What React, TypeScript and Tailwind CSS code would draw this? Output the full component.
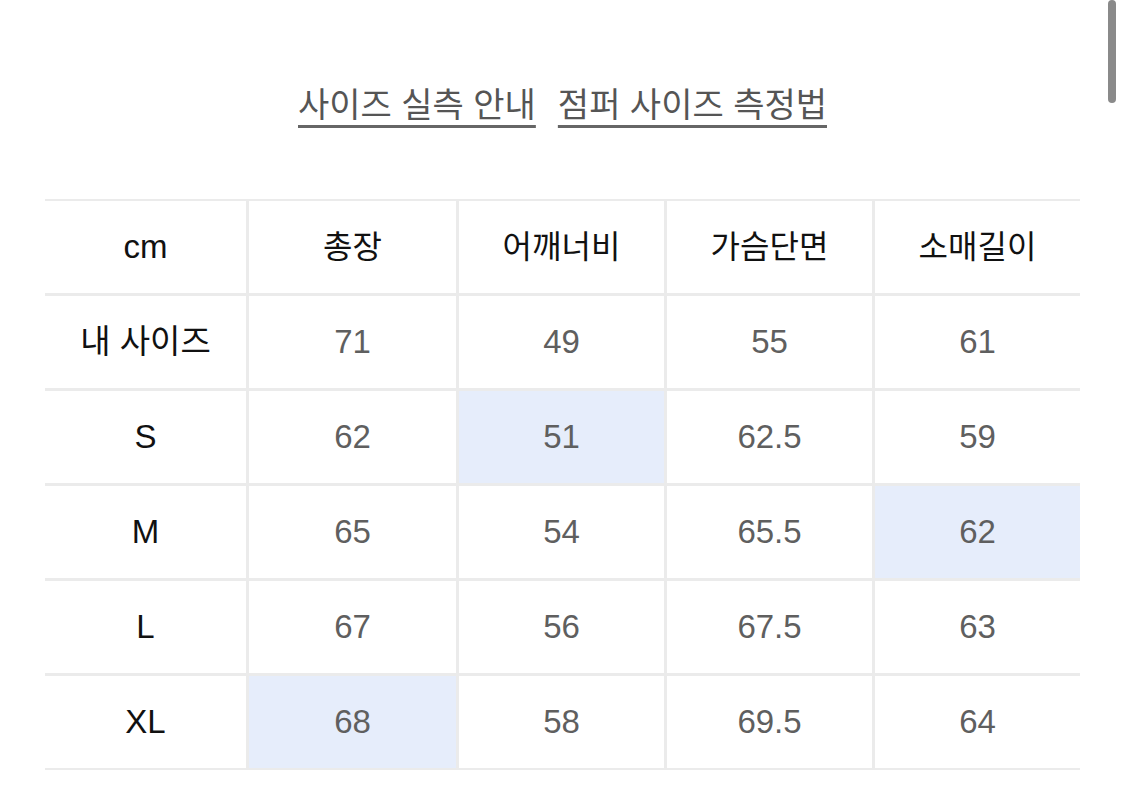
const cols = ['총장', '어깨너비', '가슴단면', '소매길이']

const rows: { label: string; values: string[]; hl?: number }[] = [
  { label: '내 사이즈', values: ['71', '49', '55', '61'] },
  { label: 'S', values: ['62', '51', '62.5', '59'], hl: 1 },
  { label: 'M', values: ['65', '54', '65.5', '62'], hl: 3 },
  { label: 'L', values: ['67', '56', '67.5', '63'] },
  { label: 'XL', values: ['68', '58', '69.5', '64'], hl: 0 },
]

const font = "font-['Liberation_Sans','Noto_Sans_CJK_KR',sans-serif]"

export default function App() {
  return (
    <div className={`relative min-h-[808px] bg-white ${font}`}>
      {/* scrollbar */}
      <div className="absolute right-[9px] top-0 h-[103px] w-[8px] rounded-full bg-[#8a8a8a]" />

      <div className="flex justify-center gap-[22px] pt-[84px] text-[34px] leading-[42px] text-[#555]">
        <span className="underline decoration-[3px] underline-offset-[8px] decoration-[#666]">사이즈 실측 안내</span>
        <span className="underline decoration-[3px] underline-offset-[8px] decoration-[#666]">점퍼 사이즈 측정법</span>
      </div>

      <div className="ml-[45px] mt-[73px] grid w-[1035px] grid-cols-[201px_207px_205px_205px_205px] gap-[3px] bg-[#ebebeb] py-[2px]">
        <div className="flex h-[92px] items-center justify-center bg-white text-[33px] text-[#111]">cm</div>
        {cols.map(c => (
          <div key={c} className="flex h-[92px] items-center justify-center bg-white text-[32px] text-[#111]">
            {c}
          </div>
        ))}
        {rows.map(r => (
          <>
            <div key={r.label} className="flex h-[92px] items-center justify-center bg-white text-[33px] text-[#111]">
              {r.label}
            </div>
            {r.values.map((v, i) => (
              <div
                key={r.label + i}
                className={`flex h-[92px] items-center justify-center text-[33px] text-[#5f5f5f] ${
                  r.hl === i ? 'bg-[#e6edfb]' : 'bg-white'
                }`}
              >
                {v}
              </div>
            ))}
          </>
        ))}
      </div>
    </div>
  )
}
